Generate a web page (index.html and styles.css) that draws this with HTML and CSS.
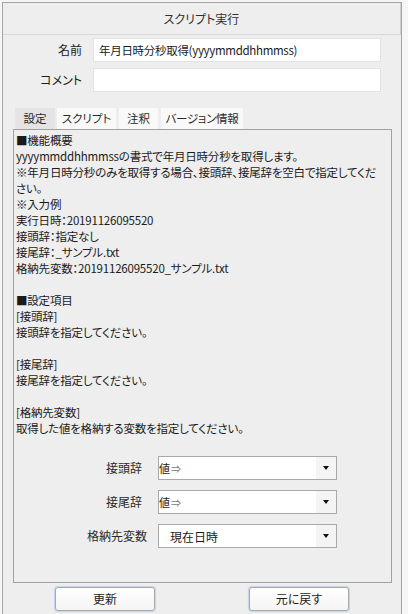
FILE: index.html
```html
<!DOCTYPE html>
<html lang="ja">
<head>
<meta charset="utf-8">
<title>スクリプト実行</title>
<link rel="stylesheet" href="styles.css">
</head>
<body>
<div class="frame">
  <div class="header">スクリプト実行</div>
  <div class="fields">
    <label class="flabel">名前</label>
    <div class="input">年月日時分秒取得(yyyymmddhhmmss)</div>
    <label class="flabel">コメント</label>
    <div class="input"></div>
  </div>
  <div class="tabs">
    <div class="tab tab-settings active">設定</div>
    <div class="tab tab-script">スクリプト</div>
    <div class="tab tab-note">注釈</div>
    <div class="tab tab-version">バージョン情報</div>
  </div>
  <div class="panel">
<div class="desc">■機能概要
yyyymmddhhmmssの書式で年月日時分秒を取得します。
※年月日時分秒のみを取得する場合、接頭辞、接尾辞を空白で指定してくだ
さい。
※入力例
実行日時：20191126095520
接頭辞：指定なし
接尾辞：_サンプル.txt
格納先変数：20191126095520_サンプル.txt

■設定項目
[接頭辞]
接頭辞を指定してください。

[接尾辞]
接尾辞を指定してください。

[格納先変数]
取得した値を格納する変数を指定してください。</div>
    <div class="settings">
      <span class="slabel slabel-short">接頭辞</span>
      <div class="combo">
        <span class="cval cval-edit">値<span class="arrow-sym">⇒</span></span>
        <span class="cbtn"><span class="tri"></span></span>
      </div>
      <span class="slabel slabel-short">接尾辞</span>
      <div class="combo">
        <span class="cval cval-edit">値<span class="arrow-sym">⇒</span></span>
        <span class="cbtn"><span class="tri"></span></span>
      </div>
      <span class="slabel">格納先変数</span>
      <div class="combo">
        <span class="cval cval-list">現在日時</span>
        <span class="cbtn"><span class="tri"></span></span>
      </div>
    </div>
  </div>
  <div class="buttons">
    <button class="btn">更新</button>
    <button class="btn">元に戻す</button>
  </div>
</div>
</body>
</html>
```

FILE: styles.css
```css
html, body {
  margin: 0;
  padding: 0;
}

body {
  background: #f6f6f6;
  font-family: "Noto Sans CJK JP", "Noto Sans", sans-serif;
  font-size: 12px;
  color: #1e1e1e;
  font-feature-settings: "palt";
}

.frame {
  margin: 2px 0 0 2px;
  width: 400px;
  height: 612px;
  background: #eeeeee;
  border: 1px solid #a4a4a4;
  border-bottom: none;
  box-sizing: border-box;
}

.header {
  height: 31px;
  border-bottom: 1px solid #d8d8d8;
  border-right: 1px solid #d0d0d0;
  display: flex;
  align-items: center;
  justify-content: center;
  color: #303030;
  font-size: 12px;
}

.fields {
  display: grid;
  grid-template-columns: 79px 288px;
  column-gap: 11px;
  row-gap: 6px;
  padding-top: 3px;
  align-items: center;
}

.flabel {
  text-align: right;
  color: #202020;
  line-height: 16px;
}

.input {
  height: 24px;
  box-sizing: border-box;
  background: #ffffff;
  border: 1px solid #e2e2e2;
  padding-left: 5px;
  line-height: 22px;
  font-size: 11.5px;
  letter-spacing: -0.3px;
  color: #1a1a1a;
  white-space: nowrap;
}

.tabs {
  display: flex;
  margin: 16px 0 0 12px;
  height: 21px;
}

.tab {
  background: #f9f9f9;
  line-height: 20px;
  height: 21px;
  box-sizing: border-box;
  color: #2a2a2a;
  text-align: center;
  font-size: 11.5px;
  white-space: nowrap;
}

.tab.active {
  background: #e4e4e4;
}

.tab-settings { width: 40px; }
.tab-script { width: 59px; margin-left: 2px; }
.tab-note { width: 39px; margin-left: 3px; }
.tab-version { width: 82px; margin-left: 3px; letter-spacing: -0.3px; }

.panel {
  margin-left: 10px;
  width: 379px;
  height: 454px;
  box-sizing: border-box;
  border: 1px solid #a0a0a0;
  background: #eeeeee;
  overflow: hidden;
}

.desc {
  white-space: pre;
  line-height: 16px;
  padding: 2px 0 0 2px;
  color: #1a1a1a;
  font-size: 11.5px;
  letter-spacing: -0.2px;
}

.settings {
  display: grid;
  grid-template-columns: 133px 179px;
  column-gap: 11px;
  row-gap: 10px;
  margin-top: 20px;
  align-items: center;
}

.slabel {
  text-align: right;
  color: #2a2a2a;
  line-height: 16px;
}

.slabel-short {
  padding-right: 5px;
}

.combo {
  height: 24px;
  box-sizing: border-box;
  background: #ffffff;
  border: 1px solid #a9a9a9;
  display: flex;
  align-items: stretch;
}

.cval {
  flex: 1;
  display: flex;
  align-items: center;
  white-space: nowrap;
}

.cval-edit {
  padding-left: 0;
  font-size: 11px;
  color: #222;
}

.arrow-sym {
  color: #777;
  font-size: 10px;
  margin-left: 1px;
}

.cval-list {
  padding-left: 11px;
  font-size: 12px;
  color: #1a1a1a;
}

.cbtn {
  width: 20px;
  background: #f4f4f4;
  display: flex;
  align-items: center;
  justify-content: center;
}

.tri {
  width: 0;
  height: 0;
  border-left: 3.5px solid transparent;
  border-right: 3.5px solid transparent;
  border-top: 4px solid #111;
}

.buttons {
  display: flex;
  gap: 94px;
  padding: 4px 0 0 52px;
}

.btn {
  width: 100px;
  height: 24px;
  box-sizing: border-box;
  border: 1px solid #a8a8a8;
  border-radius: 3px;
  background: linear-gradient(#fefefe, #f5f5f5);
  box-shadow: 0 0 1px 1px rgba(140, 185, 230, 0.45);
  font-family: "Noto Sans CJK JP", "Noto Sans", sans-serif;
  font-size: 12px;
  font-feature-settings: "palt";
  color: #1e1e1e;
  padding: 0;
  line-height: 20px;
}
```
